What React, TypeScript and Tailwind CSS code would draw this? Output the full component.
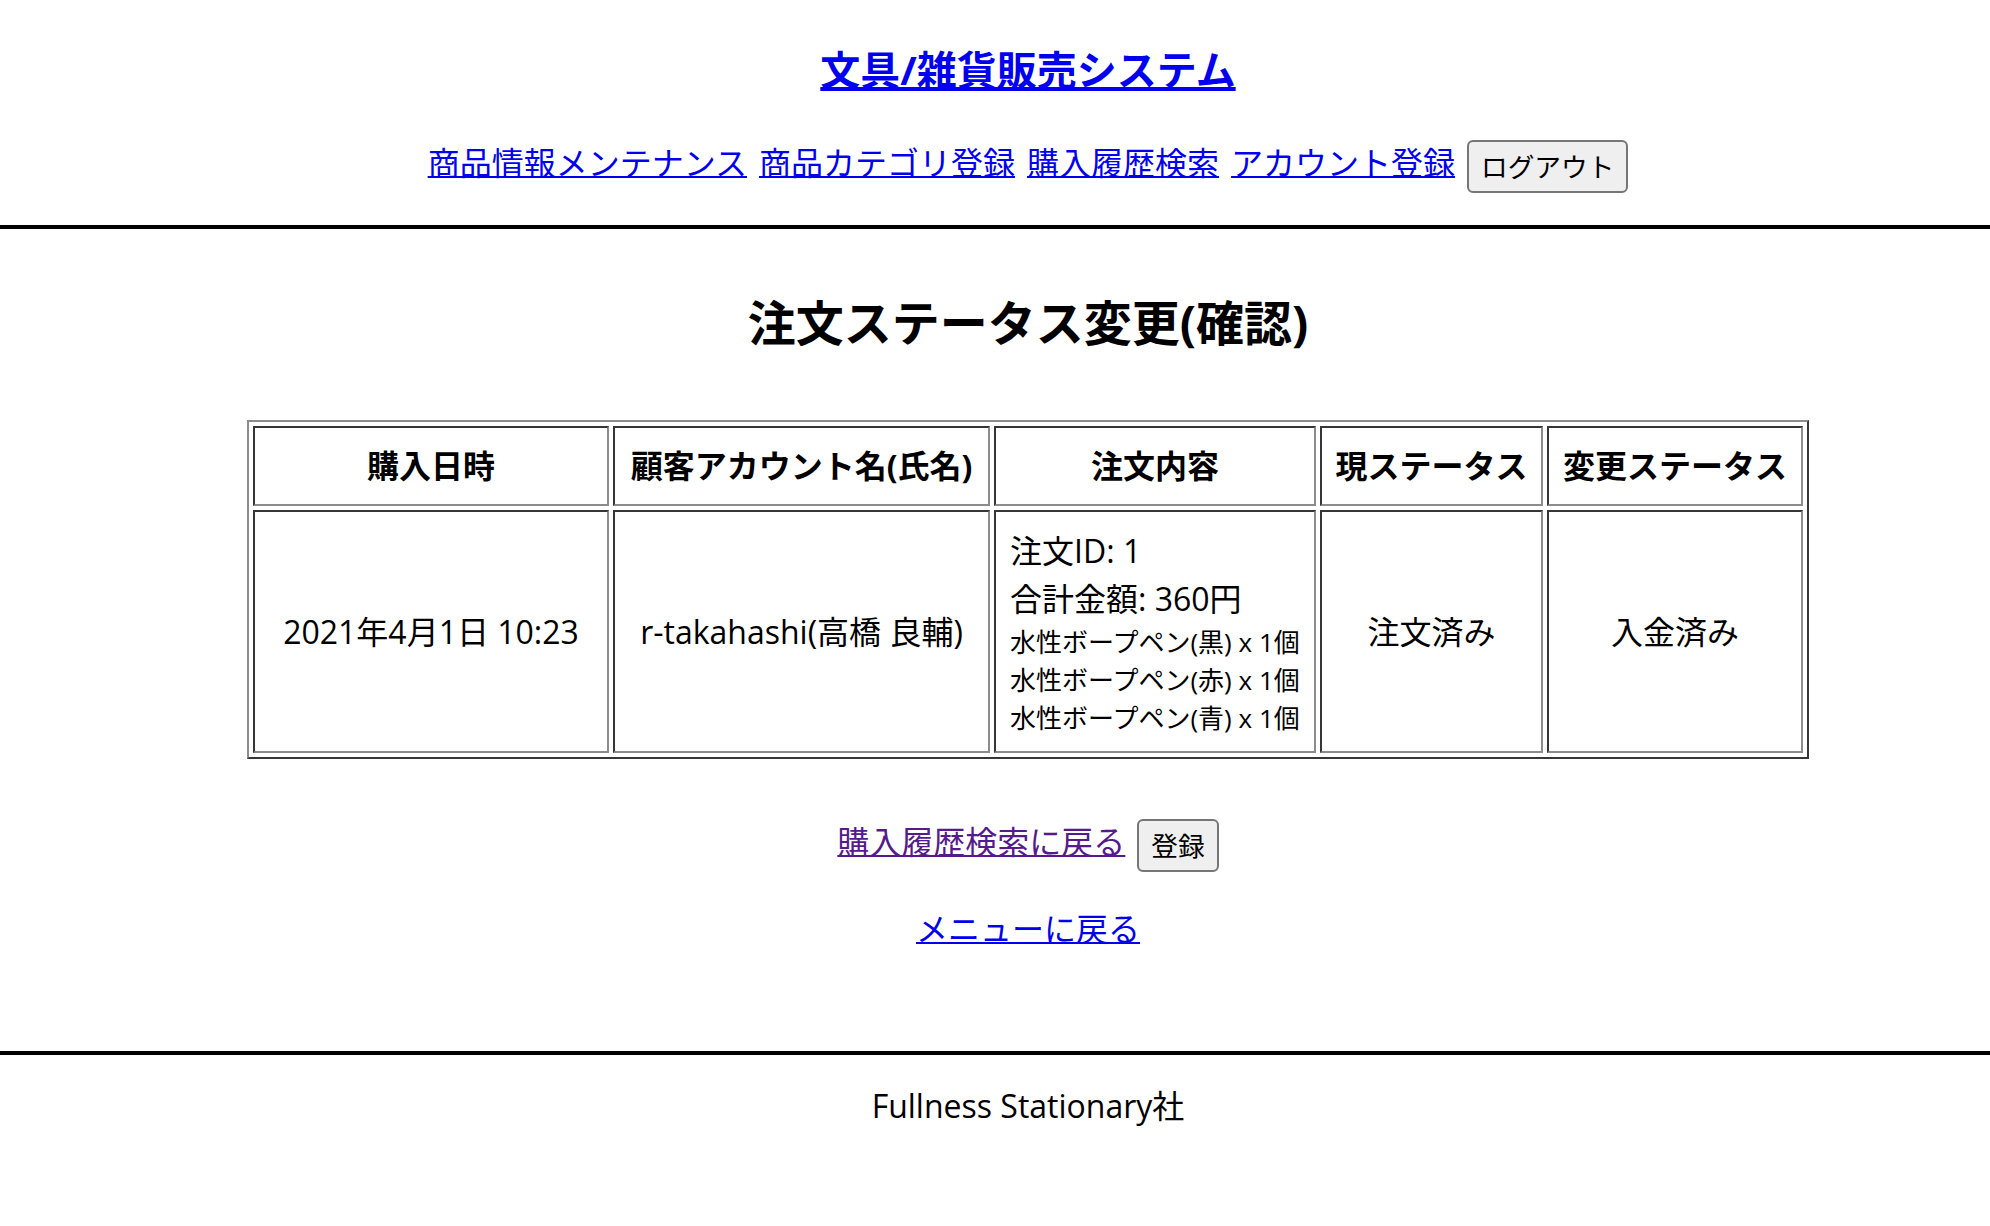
const navLinks = ["商品情報メンテナンス", "商品カテゴリ登録", "購入履歴検索", "アカウント登録"];

const items = ["水性ボープペン(黒) x 1個", "水性ボープペン(赤) x 1個", "水性ボープペン(青) x 1個"];

const cell =
  "border-2 border-t-[#363636] border-l-[#363636] border-r-[#8c8c8c] border-b-[#8c8c8c] px-[12px] whitespace-nowrap";

const btn =
  "h-[53px] px-[12px] bg-[#efefef] border-2 border-[#767676] rounded-[6px] text-[26.67px] leading-[40px] text-black";

export default function App() {
  return (
    <div className="min-h-[1226px] bg-white text-black font-['Open_Sans','Noto_Sans_CJK_JP',sans-serif] text-[32px]">
      <header className="border-b-4 border-black pb-[32px]">
        <div className="pl-[66px] pt-[40px] flex flex-col items-center">
          <a
            href="#"
            className="text-[40px] leading-[60px] font-bold text-[#0000ee] underline decoration-[4px]"
          >
            文具/雑貨販売システム
          </a>
          <nav className="mt-[40px] h-[53px] flex items-center gap-3">
            {navLinks.map((label) => (
              <a key={label} href="#" className="pb-[8px] leading-[40px] text-[#0000ee] underline decoration-2">
                {label}
              </a>
            ))}
            <button className={btn}>ログアウト</button>
          </nav>
        </div>
      </header>

      <main className="pl-[66px] flex flex-col items-center">
        <h2 className="mt-[62px] text-[48px] leading-[64px] font-bold">注文ステータス変更(確認)</h2>

        <table className="mt-[65px] w-[1562px] table-fixed border-separate border-spacing-1 border-2 border-t-[#8c8c8c] border-l-[#8c8c8c] border-r-[#363636] border-b-[#363636]">
          <thead>
            <tr>
              <th className={`${cell} w-[356px] py-[14px] leading-[48px] font-bold`}>購入日時</th>
              <th className={`${cell} w-[377px] py-[14px] leading-[48px] font-bold`}>顧客アカウント名(氏名)</th>
              <th className={`${cell} w-[322px] py-[14px] leading-[48px] font-bold`}>注文内容</th>
              <th className={`${cell} w-[223px] py-[14px] leading-[48px] font-bold`}>現ステータス</th>
              <th className={`${cell} w-[256px] py-[14px] leading-[48px] font-bold`}>変更ステータス</th>
            </tr>
          </thead>
          <tbody>
            <tr>
              <td className={`${cell} text-center align-middle leading-[48px]`}>2021年4月1日 10:23</td>
              <td className={`${cell} text-center align-middle leading-[48px]`}>r-takahashi(高橋 良輔)</td>
              <td className={`${cell} pl-[14px] pt-[15px] pb-[14px] align-middle`}>
                <div className="leading-[48px]">注文ID: 1</div>
                <div className="leading-[48px]">合計金額: 360円</div>
                {items.map((item) => (
                  <div key={item} className="text-[26px] leading-[38px]">
                    {item}
                  </div>
                ))}
              </td>
              <td className={`${cell} text-center align-middle leading-[48px]`}>注文済み</td>
              <td className={`${cell} text-center align-middle leading-[48px]`}>入金済み</td>
            </tr>
          </tbody>
        </table>

        <div className="mt-[60px] h-[53px] flex items-center gap-3">
          <a href="#" className="pb-[8px] leading-[40px] text-[#551a8b] underline decoration-2">
            購入履歴検索に戻る
          </a>
          <button className={btn}>登録</button>
        </div>

        <a href="#" className="mt-[33px] leading-[48px] text-[#0000ee] underline decoration-2">
          メニューに戻る
        </a>
      </main>

      <footer className="mt-[98px] border-t-4 border-black">
        <p className="pl-[66px] pt-[27px] text-center leading-[48px]">Fullness Stationary社</p>
      </footer>
    </div>
  );
}
